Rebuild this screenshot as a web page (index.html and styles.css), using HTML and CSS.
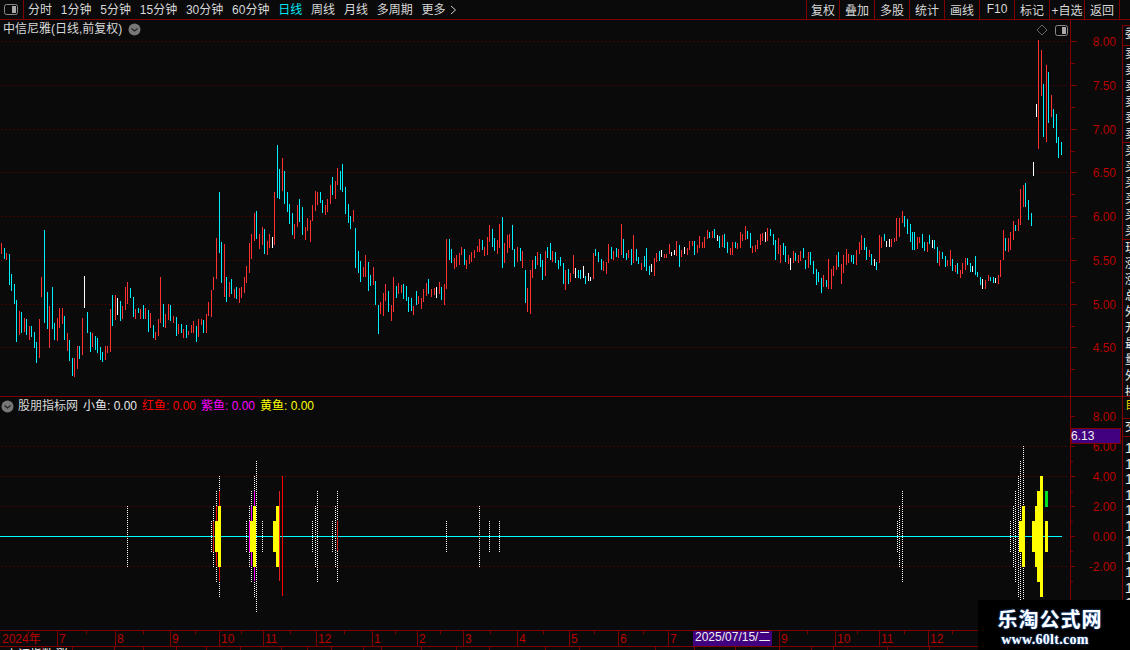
FILE: index.html
```html
<!DOCTYPE html>
<html lang="zh">
<head>
<meta charset="utf-8">
<title>中信尼雅</title>
<link rel="stylesheet" href="styles.css">
</head>
<body>
<div class="app">
  <header class="toolbar">
    <div class="tool-icon">
      <svg width="14" height="11" viewBox="0 0 14 11"><rect x="0.5" y="0.5" width="13" height="10" rx="2" class="ico-box"/><rect x="8" y="2" width="4" height="7" class="ico-fill"/></svg>
    </div>
    <nav class="periods">
      <span>分时</span><span>1分钟</span><span>5分钟</span><span>15分钟</span><span>30分钟</span><span>60分钟</span><span class="active">日线</span><span>周线</span><span>月线</span><span>多周期</span><span class="more">更多<svg width="7" height="10" viewBox="0 0 7 10"><path d="M1 1l4.500 4-4.500 4" class="chev"/></svg></span>
    </nav>
    <nav class="actions">
      <span>复权</span><span>叠加</span><span>多股</span><span>统计</span><span>画线</span><span>F10</span><span>标记</span><span>+自选</span><span>返回</span>
    </nav>
  </header>
  <div class="workspace">
    <main class="charts">
      <section class="pane price">
        <svg id="priceChart" class="chart" width="1122" height="376" viewBox="0 20 1122 376"></svg>
        <div class="title">
          <span>中信尼雅(日线,前复权)</span>
          <svg class="drop" width="13" height="13" viewBox="0 0 13 13"><circle cx="6.500" cy="6.500" r="6" class="drop-bg"/><path d="M3.500 5.500l3 2.500 3-2.500" class="drop-chev"/></svg>
        </div>
        <div class="pane-tools">
          <svg width="12" height="12" viewBox="0 0 12 12"><path d="M6 1l5 5-5 5-5-5z" class="diamond"/></svg>
          <svg width="13" height="11" viewBox="0 0 13 11"><rect x="0.500" y="0.500" width="12" height="10" rx="2" class="ico-box"/><rect x="7" y="2" width="4" height="7" class="ico-fill"/></svg>
        </div>
      </section>
      <section class="pane indicator">
        <svg id="indChart" class="chart" width="1122" height="233" viewBox="0 397 1122 233"></svg>
        <div class="legend">
          <svg class="drop" width="13" height="13" viewBox="0 0 13 13"><circle cx="6.500" cy="6.500" r="6" class="drop-bg"/><path d="M3.500 5.500l3 2.500 3-2.500" class="drop-chev"/></svg>
          <span class="lg-name">股朋指标网</span>
          <span class="lg lg-w">小鱼: 0.00</span>
          <span class="lg lg-r">红鱼: 0.00</span>
          <span class="lg lg-m">紫鱼: 0.00</span>
          <span class="lg lg-y">黄鱼: 0.00</span>
        </div>
      </section>
      <svg id="timeAxis" class="chart time" width="1122" height="17" viewBox="0 630 1122 17"></svg>
      <div id="statusBar" class="status"></div>
    </main>
    <aside id="side" class="side"></aside>
  </div>
  <div class="watermark">
    <div class="wm-cn">乐淘公式网</div>
    <div class="wm-en">www.60lt.com</div>
  </div>
</div>
<script src="chart.js"></script>
</body>
</html>
```
FILE: styles.css
```css
* { box-sizing: border-box; }
html, body { margin: 0; padding: 0; background: #0a0a0a; }
body { width: 1130px; height: 650px; overflow: hidden; font: 12px "Liberation Sans", "Noto Sans CJK SC", sans-serif; color: #d8d8d8; }
.app { position: relative; width: 1130px; height: 650px; display: flex; flex-direction: column; overflow: hidden; }

.toolbar { height: 20px; flex: none; display: flex; align-items: stretch; border-bottom: 1px solid #800000; }
.tool-icon { width: 24px; flex: none; display: flex; align-items: center; padding-left: 4px; border-right: 1px solid #800000; }
.ico-box { fill: none; stroke: #8a8a8a; }
.ico-fill { fill: #a8a8a8; }
.periods { display: flex; align-items: center; gap: 8.800px; padding-left: 4px; flex: 1; line-height: 18px; }
.periods .active { color: #00e8f8; }
.more { display: flex; align-items: center; gap: 4px; }
.chev { fill: none; stroke: #cfcfcf; }
.actions { display: flex; padding-right: 10px; }
.actions span { width: 35px; display: flex; align-items: center; justify-content: center; border-left: 1px solid #800000; padding-bottom: 1px; }
.actions span:first-child { width: 33px; }
.actions span:last-child { border-right: 1px solid #800000; width: 36px; }

.workspace { display: flex; flex: 1; min-height: 0; }
.charts { width: 1122px; flex: none; display: flex; flex-direction: column; }
.side { flex: 1; border-left: 1px solid #800000; border-top: 1px solid #800000; margin-top: 5px; overflow: hidden; display: flex; flex-direction: column; }

.pane { position: relative; flex: none; }
.price { height: 376px; }
.indicator { height: 234px; border-top: 1px solid #800000; }
.chart { display: block; }
.time { flex: none; }

.title { position: absolute; left: 3px; top: 0; display: flex; align-items: center; gap: 6px; line-height: 18px; }
.drop { flex: none; }
.drop-bg { fill: #777; }
.drop-chev { fill: none; stroke: #222; stroke-width: 1.200; }
.pane-tools { position: absolute; left: 1036px; top: 4px; display: flex; align-items: center; gap: 7px; }
.diamond { fill: none; stroke: #666; }

.legend { position: absolute; left: 1px; top: 1px; display: flex; align-items: center; line-height: 16px; }
.lg-name { margin-left: 4px; width: 65px; }
.lg { white-space: pre; width: 59px; }
.lg-w { color: #e8e8e8; }
.lg-r { color: #ff0000; }
.lg-m { color: #ff00ff; }
.lg-y { color: #ffff00; }

.ax { fill: #b80000; font: 12px "Liberation Sans", "Noto Sans CJK SC", sans-serif; }
.ax-end { text-anchor: end; }
.ax-date { fill: #f0f0f0; font: 12px "Liberation Sans", "Noto Sans CJK SC", sans-serif; }
.ax-last { fill: #f0f0f0; font: 12px "Liberation Sans", sans-serif; }

.status { display: flex; flex: none; height: 3px; overflow: visible; }
.status span { flex: none; height: 3px; border-right: 1px solid #800000; padding-left: 6px; line-height: 17px; white-space: pre; color: #fff; }

.side-cell { flex: none; border-bottom: 1px solid #800000; padding-left: 2px; overflow: hidden; }
.side-row { display: block; height: 16px; line-height: 16px; color: #eee; white-space: nowrap; }
.side-num { height: 15.500px; line-height: 15.500px; font-size: 14px; }
.c1 { height: 20px; }
.c2, .c3 { height: 97px; }
.c4 { height: 157px; }
.c5 { height: 22px; }
.c5 .side-row { color: #e0d000; }
.c6 { height: 18px; }
.c7 { border-bottom: 0; flex: 1; padding-top: 4px; }

.watermark { position: absolute; left: 978px; top: 600px; width: 152px; height: 50px; background: #000; text-align: center; }
.wm-cn { font: bold 20px/22px "Noto Sans CJK SC", sans-serif; color: #fff; letter-spacing: 1px; margin-top: 8px; text-shadow: 0 0 2px #3a8cff; margin-left: -8px; }
.wm-en { font: bold 14px/16px "Liberation Serif", serif; color: #fff; letter-spacing: 0.300px; margin-top: 2px; margin-left: -18px; text-shadow: 0 0 2px #3a8cff; }
```
FILE: chart.js
```js
(function () {
var NS = 'http://www.w3.org/2000/svg';
var RED = '#ff3232', CY = '#00f0ff', WH = '#ffffff', AX = '#800000', DOT = '#700000';
var COL = { r: RED, c: CY, w: WH };

var ZONES = [
  { ox: 0, oy: 140, d: '3,309,342,r;13,324,357,c;19,339,360,r;28,342,435,c;34,402,453,c;43,432,492,c;49,480,606,c;58,513,585,r;64,516,579,c;73,534,576,r;79,537,585,c;88,558,600,r;94,558,591,c;103,576,624,c;109,606,669,c;118,537,654,r;124,411,471,r;133,270,549,c;142,456,567,c;148,498,624,r;157,441,567,c;163,549,600,c;172,534,603,r;178,504,564,r;187,504,552,r;193,528,600,c;202,579,633,r;208,600,663,c;217,654,708,c;223,654,711,r;232,618,687,r;238,618,657,c;247,534,645,r;253,408,504,w;262,516,579,c;271,576,636,c;277,579,621,r;286,588,630,c;292,594,639,c;301,621,660,c;307,636,666,c;316,618,660,r;322,618,639,r;331,507,636,r;337,465,558,c;346,465,540,r;352,474,525,w;361,483,543,c;367,498,537,r;376,441,510,r;382,426,492,r;391,444,474,c;400,471,531,c;406,507,537,r;415,504,519,c;421,507,537,r;430,495,537,c;436,504,537,r;445,510,576,c;451,519,564,r;460,555,594,c;466,576,600,r;475,537,588,r;481,411,549,r;490,492,561,c;496,522,564,r;505,492,540,r;511,495,543,c;520,528,549,r;529,531,588,c;535,552,582,r;544,552,579,c;550,567,594,r;559,555,594,c;565,573,585,r;574,555,579,r;580,543,579,r;589,558,606,c;595,537,591,r;604,537,555,r;610,540,579,c;619,522,579,r;625,486,528,r;634,450,531,r;640,411,450,r;649,294,417,r;658,156,339,c;664,306,429,c;673,312,471,r;679,411,486,c;688,426,471,r;694,417,462,c;703,447,474,r;709,441,477,c;718,444,489,r' },
  { ox: 240, oy: 130, d: '4,471,504,r;13,441,489,r;19,408,459,r;28,339,429,r;34,312,387,r;43,249,333,r;49,243,327,c;58,312,357,r;67,291,345,r;73,297,372,c;82,333,375,r;88,312,354,r;97,321,354,w;103,186,345,r;112,45,204,c;118,117,207,c;127,84,183,r;133,123,222,c;142,186,246,c;148,222,282,c;157,249,315,c;163,282,327,r;172,225,291,r;178,207,276,c;187,231,315,c;196,291,330,r;202,264,303,r;211,270,336,r;217,225,273,r;226,183,243,r;232,186,225,r;241,186,219,c;247,210,249,c;256,225,255,r;262,207,246,r;271,165,222,r;277,141,195,c;286,153,207,r;292,114,165,r;301,123,180,c;307,102,186,c;316,171,252,c;325,222,279,c;331,258,297,c;340,240,276,r;346,294,414,c;355,363,429,c;361,393,456,c;370,411,441,r;376,375,441,r;385,396,483,c;391,435,468,c;400,411,465,r;406,453,525,c;415,525,612,c;421,516,552,r;430,489,558,r;436,462,513,r;445,483,546,c;454,525,573,r;460,441,546,r;469,468,504,c;475,459,492,r;484,465,489,r;490,462,507,c;499,468,513,c;505,501,546,c;514,504,543,c;520,528,555,r;529,483,525,c;535,498,522,r;544,504,537,r;550,477,516,r;559,459,498,r;565,447,492,c;574,477,501,r;583,474,495,r;589,471,504,w;598,456,492,r;604,471,510,c;613,462,525,r;619,327,477,r;628,327,390,c;634,357,399,c;643,384,417,r;649,375,411,r;658,369,405,r;664,351,375,r;673,357,405,c;679,390,417,r;688,375,402,r;694,366,396,r;703,360,384,r;712,348,366,r;718,327,366,r;727,330,360,c;733,351,378,r;742,321,375,r;748,285,336,r;757,297,351,c;763,324,363,c;772,330,372,r;778,282,354,r;787,261,414,c;793,339,399,r;802,315,369,r;808,312,354,r;817,285,360,c;823,357,411,c;832,351,396,r;841,354,393,c;847,363,414,r;856,420,519,c;862,474,546,r;871,420,552,r;877,390,444,r;886,378,417,c;892,366,405,r' },
  { ox: 540, oy: 200, d: '1,162,201,c;7,180,240,c;16,153,228,r;22,141,174,c;31,129,180,c;37,153,186,r;46,156,189,c;55,180,207,c;61,171,198,c;70,189,252,c;76,210,270,r;85,207,252,c;91,219,246,r;100,165,222,r;106,204,234,w;115,210,234,c;121,210,237,c;130,198,234,w;136,228,252,c;145,219,243,w;151,231,243,w;160,159,237,r;166,147,168,c;175,156,186,c;184,177,210,c;190,183,213,r;199,186,222,r;205,132,189,r;214,141,177,c;220,153,180,r;229,144,171,c;235,147,174,r;244,72,165,r;250,117,174,c;259,159,180,c;265,150,174,r;274,147,195,c;280,105,189,r;289,147,183,c;295,171,192,c;304,189,210,r;313,168,201,c;319,144,213,c;328,198,225,c;334,192,216,w;343,174,228,r;349,159,186,r;358,153,183,c;364,150,171,w;373,162,174,r;379,162,174,r;388,132,162,r;394,156,168,w;403,150,165,w;409,123,168,r;418,135,201,c;424,150,171,r;433,141,162,w;442,144,165,r;448,123,150,r;457,123,138,r;463,123,165,c;472,135,159,r;478,108,144,r;487,126,144,r;493,111,144,r;502,90,117,r;508,96,114,c;517,93,114,r;523,87,114,c;532,105,123,w;538,108,144,c;547,105,141,r;553,102,144,c;562,126,159,c;571,144,165,r;577,126,165,r;586,126,144,c;592,129,147,r;601,96,144,r;607,102,123,r;616,78,120,r;622,93,117,c;631,99,144,c;637,138,159,r;646,135,156,r;652,120,147,r;661,102,135,r;667,99,123,r;676,96,126,w;682,84,123,r;691,87,108,c;700,102,135,c;706,120,180,c;715,114,162,r;721,135,189,r;730,129,165,c;736,138,186,c;745,165,192,r;751,174,210,w;760,153,189,r;766,159,183,c;775,165,189,r;781,153,183,r;790,144,174,c;796,180,207,c;805,156,204,r;811,156,195,c;820,183,222,c;829,207,255,c;835,216,246,c;844,234,279,c;850,225,261,r;859,240,261,c;865,177,267,r;874,207,267,r;880,198,228,r;889,165,210,r;895,156,201,c;904,192,252,r;910,165,219,r;919,147,195,r;925,162,189,r;934,165,186,c;940,165,192,c;949,150,195,r;958,126,162,r;964,105,150,r;973,114,150,c;979,141,180,c;988,150,171,r;994,162,195,c;1003,177,198,w;1009,186,210,c;1018,105,189,r;1024,111,144,r;1033,102,123,c;1039,123,141,w;1048,117,141,w;1054,117,141,r;1063,114,126,r;1069,54,123,r;1078,54,111,r;1087,33,69,r;1093,48,81,c;1102,57,102,c;1111,72,126,c;1117,96,150,c;1123,96,150,c;1132,111,147,r;1138,111,129,r;1147,102,144,c;1153,126,153,c;1162,126,156,r;1168,105,132,c;1177,120,144,w;1183,120,147,c;1192,141,189,c;1198,153,198,r;1207,156,177,c;1216,168,201,c;1222,180,198,r;1231,150,198,r;1237,177,213,c;1246,195,216,r;1252,189,222,c;1261,210,234,r;1267,189,222,r;1276,174,210,r;1282,174,195,c;1291,189,216,c;1297,198,216,w;1306,168,225,c;1312,216,231,c;1321,231,255,c;1327,237,267,w;1336,240,267,r;1345,225,243,r' },
  { ox: 960, oy: 20, d: '91,771,783,c;100,771,789,c;106,774,789,w;115,765,792,r;121,720,771,r;130,630,720,r;136,654,693,c;145,654,696,r;151,636,690,r;160,603,660,r;166,615,633,c;175,597,633,r;181,507,615,r;190,495,561,r;196,489,561,c;205,540,600,c;214,579,618,c;220,426,468,w;229,252,291,w;235,60,387,r;244,90,228,r;250,192,351,c;259,135,366,r;265,156,309,c;274,225,291,r;280,267,324,c;289,282,369,c;295,351,414,c;304,366,405,c' }
];

function el(name, attrs, text) {
  var n = document.createElementNS(NS, name);
  for (var k in attrs) n.setAttribute(k, attrs[k]);
  if (text !== undefined) n.textContent = text;
  return n;
}
function rect(s, x, y, w, h, fill) { s.appendChild(el('rect', { x: x, y: y, width: w, height: h, fill: fill })); }
function hDots(s, y, x2) { for (var x = 1; x < x2; x += 4) rect(s, x, y, 1, 1, DOT); }
function vDots(s, x, y1, y2) { for (var y = y1; y < y2; y += 2) rect(s, x, y, 1, 1, WH); }
function label(s, x, y, t, cls) { s.appendChild(el('text', { x: x, y: y, 'class': cls }, t)); }

/* ---------- price pane ---------- */
var price = document.getElementById('priceChart');
var levels = [[41, '8.00'], [85, '7.50'], [129, '7.00'], [172, '6.50'], [216, '6.00'], [260, '5.50'], [304, '5.00'], [347, '4.50']];
levels.forEach(function (l) {
  hDots(price, l[0], 1066);
  rect(price, 1071, l[0], 6, 1, AX);
  rect(price, 1071, l[0] + 22, 4, 1, AX);
  label(price, 1116, l[0] + 5, l[1], 'ax ax-end');
});
ZONES.forEach(function (z) {
  z.d.split(';').forEach(function (b) {
    var p = b.split(',');
    var y1 = Math.round(z.oy + p[1] / 3), y2 = Math.round(z.oy + p[2] / 3);
    rect(price, Math.floor(z.ox + p[0] / 3), y1, 1, y2 - y1, COL[p[3]]);
  });
});
rect(price, 1070, 20, 1, 376, AX);

/* ---------- indicator pane ---------- */
var ind = document.getElementById('indChart');
[446, 476, 506, 566].forEach(function (y) { hDots(ind, y, 1066); });
[[416, '8.00'], [446, '6.00'], [476, '4.00'], [506, '2.00'], [536, '0.00'], [566, '-2.00']].forEach(function (l) {
  rect(ind, 1071, l[0], 4, 1, AX);
  rect(ind, 1071, l[0] + 15, 2, 1, AX);
  label(ind, 1116, l[0] + 5, l[1], 'ax ax-end');
});
rect(ind, 0, 536, 1062, 1, '#00ffff');

[
  [127, 506, 567], [211, 521, 552], [213, 506, 567], [216, 491, 582], [219, 476, 597],
  [246, 521, 552], [249, 506, 567], [251, 491, 582], [254, 476, 597], [256, 461, 612], [262, 521, 552],
  [312, 521, 552], [315, 506, 567], [317, 491, 582], [332, 521, 552], [335, 506, 567], [337, 491, 582],
  [446, 521, 552], [479, 506, 567], [489, 521, 552], [499, 521, 552],
  [897, 521, 552], [899, 506, 567], [902, 491, 582],
  [1010, 521, 552], [1013, 506, 567], [1015, 491, 582], [1018, 476, 597], [1020, 461, 612], [1023, 446, 628]
].forEach(function (d) { vDots(ind, d[0], d[1], d[2]); });

[
  [213, 521, 552, '#e02020', 1], [216, 506, 566, '#ff0000', 1], [219, 491, 581, '#ff0000', 1],
  [249, 521, 552, '#ff00ff', 1], [251, 506, 566, '#ff00ff', 1], [254, 491, 581, '#ff00ff', 1],
  [279, 491, 581, '#e02020', 1], [282, 476, 596, '#ff0000', 1], [337, 521, 551, '#e02020', 1],
  [215, 521, 552, '#ffff00', 3], [218, 506, 567, '#ffff00', 3],
  [250, 521, 552, '#ffff00', 3], [253, 506, 567, '#ffff00', 3],
  [273, 521, 552, '#ffff00', 3], [276, 506, 567, '#ffff00', 3],
  [1019, 521, 552, '#ffff00', 3], [1022, 506, 567, '#ffff00', 3],
  [1032, 521, 552, '#ffff00', 3], [1035, 506, 567, '#ffff00', 3], [1037, 491, 582, '#ffff00', 3], [1040, 476, 597, '#ffff00', 3],
  [1045, 521, 552, '#ffff00', 3], [1045, 491, 507, '#00e020', 3]
].forEach(function (b) { rect(ind, b[0], b[1], b[4], b[2] - b[1], b[3]); });

rect(ind, 1070, 397, 1, 233, AX);
rect(ind, 1071, 428, 50, 16, AX);
rect(ind, 1072, 429, 48, 14, '#40007f');
label(ind, 1071, 440, '6.13', 'ax-last');

/* ---------- time axis ---------- */
var axis = document.getElementById('timeAxis');
rect(axis, 0, 630, 1122, 1, AX);
rect(axis, 0, 646, 1122, 1, AX);
label(axis, 2, 643, '2024年', 'ax');
var months = [[57, '7'], [115, '8'], [170, '9'], [219, '10'], [263, '11'], [316, '12'], [372, '1'], [417, '2'], [463, '3'], [517, '4'], [569, '5'], [618, '6'], [668, '7'], [779, '9'], [835, '10'], [879, '11'], [928, '12']];
months.forEach(function (m, i) {
  rect(axis, m[0], 630, 1, 16, AX);
  label(axis, m[0] + 2, 643, m[1], 'ax');
  var next = months[i + 1] ? months[i + 1][0] : 975;
  rect(axis, Math.round((m[0] + next) / 2), 631, 1, 3, AX);
});
rect(axis, 28, 631, 1, 3, AX);
rect(axis, 693, 631, 79, 15, '#40007f');
label(axis, 695, 641, '2025/07/15/二', 'ax-date');

/* ---------- status strip (cut off by the window) ---------- */
var bar = document.getElementById('statusBar');
[[43, '上证指数'], [30, '  涨'], [42, ''], [29, ''], [33, ''], [30, ''], [34, ''], [41, ''], [26, ''], [24, ''], [32, ''], [18, ''], [40, ''], [35, ''], [33, ''], [56, ''], [34, ''], [76, ''], [39, ''], [41, ''], [44, ''], [32, '   |'], [22, ''], [54, ''], [42, ''], [60, '']]
  .forEach(function (c) {
    var s = document.createElement('span');
    s.style.width = c[0] + 'px';
    s.textContent = c[1];
    bar.appendChild(s);
  });

/* ---------- side strip (cut off by the window) ---------- */
var side = document.getElementById('side');
function cell(cls, chars, rowCls) {
  var c = document.createElement('div');
  c.className = 'side-cell ' + cls;
  chars.split('').forEach(function (ch) {
    var r = document.createElement('span');
    r.className = 'side-row ' + (rowCls || '');
    r.textContent = ch;
    c.appendChild(r);
  });
  side.appendChild(c);
}
cell('c1', '委');
cell('c2', '卖卖卖卖卖卖');
cell('c3', '买买买买买买');
cell('c4', '现涨涨总外开最量外换净净');
cell('c5', '自');
cell('c6', '交');
cell('c7', '11111111111111', 'side-num');
})();
```
